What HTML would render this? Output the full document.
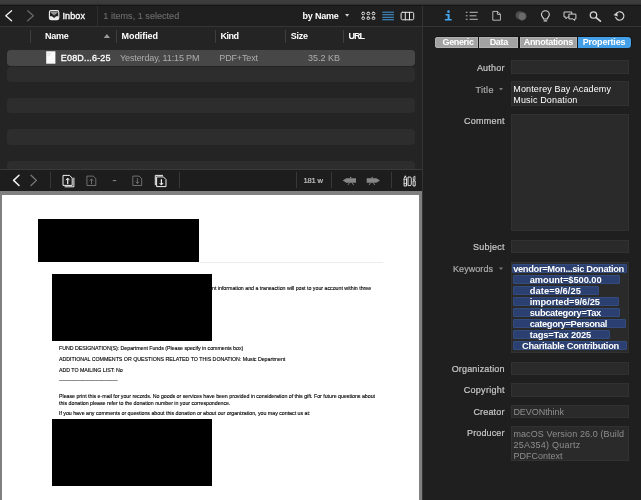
<!DOCTYPE html>
<html><head><meta charset="utf-8"><title>DEVONthink</title>
<style>
html,body{margin:0;padding:0;width:641px;height:500px;overflow:hidden;background:#1f1f1f;}
body{position:relative;font-family:"Liberation Sans",sans-serif;}
.a{position:absolute;}
.t{position:absolute;white-space:pre;line-height:1;font-family:"Liberation Sans",sans-serif;}
.d{transform:scale(0.5);transform-origin:0 0;color:#000;font-weight:normal;}
.stripe{position:absolute;left:7px;width:407.5px;height:15.2px;border-radius:4px;background:#2d2d2d;}
.hsep{position:absolute;top:30px;width:1px;height:12.5px;background:#3e3e3e;}
.vsep{position:absolute;top:172px;width:1px;height:16px;background:#383838;}
.fld{position:absolute;left:510.8px;width:118px;background:#2a2a2a;border:1px solid #313131;box-sizing:border-box;}
.tok{position:absolute;height:9.2px;background:#2b4070;border:0.5px solid #344b7e;box-sizing:border-box;border-radius:1px;}
.seg{position:absolute;top:36.7px;height:11px;background:#a2a2a2;box-shadow:inset 0 0 0 0.6px #bdbdbd;}
svg{position:absolute;overflow:visible;}
</style></head><body>
<!-- window top strip -->
<div class="a" style="left:0;top:0;width:641px;height:5px;background:linear-gradient(#3e3e3e 0%,#3b3b3b 65%,#2b2b2b 100%)"></div>
<div class="a" style="left:0;top:5px;width:641px;height:1px;background:#151515"></div>
<!-- left list pane -->
<div class="a" style="left:0;top:6px;width:422px;height:20.3px;background:#1f1f1f"></div>
<div class="a" style="left:0;top:26.7px;width:422px;height:142.5px;background:#242424"></div>
<div class="a" style="left:0;top:26px;width:641px;height:1px;background:#353535"></div>
<div class="a" style="left:97px;top:6px;width:1px;height:20px;background:#2e2e2e"></div>
<!-- header seps -->
<div class="hsep" style="left:30.2px"></div><div class="hsep" style="left:116.3px"></div><div class="hsep" style="left:215.3px"></div><div class="hsep" style="left:284.7px"></div><div class="hsep" style="left:343.1px"></div>
<!-- rows -->
<div class="stripe" style="top:50px;height:15.8px;background:#474747"></div>
<div class="stripe" style="top:66.8px"></div>
<div class="stripe" style="top:97.7px;height:15.7px"></div>
<div class="stripe" style="top:129.1px;height:15.9px"></div>
<div class="stripe" style="top:160.9px;height:8.3px;border-radius:4px 4px 0 0"></div>
<!-- viewer toolbar -->
<div class="a" style="left:0;top:169.2px;width:422px;height:1px;background:#3a3a3a"></div>
<div class="a" style="left:0;top:170.2px;width:422px;height:20.8px;background:#1d1d1d"></div>
<div class="vsep" style="left:50px"></div><div class="vsep" style="left:179px"></div><div class="vsep" style="left:296.3px"></div><div class="vsep" style="left:331.3px"></div><div class="vsep" style="left:391.3px"></div>
<!-- viewer -->
<div class="a" style="left:0;top:191px;width:421.6px;height:309px;background:#808080"></div>
<div class="a" style="left:1.7px;top:195.2px;width:417.5px;height:305px;background:#fff"></div>
<div class="a" style="left:38.4px;top:219.4px;width:160.7px;height:42.7px;background:#000"></div>
<div class="a" style="left:199px;top:262.1px;width:184px;height:0.8px;background:#ececec"></div>
<div class="a" style="left:51.8px;top:274px;width:160.2px;height:67.3px;background:#000"></div>
<div class="a" style="left:51.8px;top:418.5px;width:160.2px;height:67.2px;background:#000"></div>
<!-- divider -->
<div class="a" style="left:421.6px;top:6px;width:1.4px;height:494px;background:#343434"></div>
<!-- right pane -->
<div class="a" style="left:423px;top:6px;width:218px;height:494px;background:#1f1f1f"></div>
<div class="a" style="left:423px;top:26px;width:218px;height:1px;background:#353535"></div>
<!-- segmented -->
<div class="a" style="left:434.8px;top:36.2px;width:197px;height:12px;background:#151515;border-radius:4px"></div>
<div class="seg" style="left:435.2px;width:42.6px;border-radius:3px 0 0 3px"></div>
<div class="seg" style="left:479.4px;width:39px"></div>
<div class="seg" style="left:520px;width:56.7px"></div>
<div class="seg" style="left:578.2px;width:53.2px;border-radius:0 3px 3px 0;background:#429fe8;box-shadow:none"></div>
<!-- fields -->
<div class="fld" style="top:60px;height:13.5px"></div>
<div class="fld" style="top:81.2px;height:25px"></div>
<div class="fld" style="top:113.8px;height:117.7px"></div>
<div class="fld" style="top:240.1px;height:13px"></div>
<div class="fld" style="top:262px;height:90.8px"></div>
<div class="fld" style="top:362px;height:13.2px"></div>
<div class="fld" style="top:383.4px;height:13.2px"></div>
<div class="fld" style="top:404.6px;height:13.4px"></div>
<div class="fld" style="top:426.2px;height:35.3px"></div>
<div class="tok" style="left:512.4px;top:263.9px;width:114.7px"></div>
<div class="tok" style="left:513.2px;top:274.9px;width:107.3px"></div>
<div class="tok" style="left:513.2px;top:286.0px;width:86.2px"></div>
<div class="tok" style="left:513.2px;top:297.0px;width:105.6px"></div>
<div class="tok" style="left:513.2px;top:308.1px;width:106.7px"></div>
<div class="tok" style="left:513.2px;top:319.2px;width:112.6px"></div>
<div class="tok" style="left:513.2px;top:330.2px;width:96.8px"></div>
<div class="tok" style="left:513.2px;top:341.3px;width:113.8px"></div>

<svg class="a" style="left:0;top:0" width="641" height="500" viewBox="0 0 641 500" fill="none" stroke-linecap="round" stroke-linejoin="round">
<!-- top-left nav arrows -->
<path d="M11.6 10.8 L5.8 15.8 L11.6 20.8" stroke="#f2f2f2" stroke-width="1.3"/>
<path d="M27.6 10.8 L33.4 15.8 L27.6 20.8" stroke="#6c6c6c" stroke-width="1.2"/>
<!-- inbox icon -->
<rect x="49.4" y="10.6" width="9.4" height="9" rx="1.6" stroke="#f0f0f0" stroke-width="1.1"/>
<path d="M49.4 16.2 L52 16.2 L54.1 17.9 L56.2 16.2 L58.8 16.2 L58.8 18.4 Q58.8 19.6 57.6 19.6 L50.6 19.6 Q49.4 19.6 49.4 18.4 Z" fill="#ececec" stroke="none"/>
<path d="M50.6 12.3 H57.6" stroke="#b8b8b8" stroke-width="1" stroke-linecap="butt"/><path d="M51.7 13.5 H56.5 M52.7 14.7 H55.5" stroke="#a0a0a0" stroke-width="0.9" stroke-linecap="butt"/>
<!-- sort triangle in header -->
<path d="M106.9 33.9 L110 38 L103.8 38 Z" fill="#9a9a9a" stroke="none"/>
<!-- by Name dropdown -->
<path d="M345.1 13.9 L349.2 13.9 L347.15 16.7 Z" fill="#d4d4d4" stroke="none"/>
<!-- grid icon -->
<g stroke="#e4e4e4" stroke-width="1">
<rect x="361.80" y="12.30" width="2.8" height="2.4" rx="1.1"/><rect x="366.95" y="12.30" width="2.8" height="2.4" rx="1.1"/><rect x="372.10" y="12.30" width="2.8" height="2.4" rx="1.1"/><rect x="361.80" y="17.00" width="2.8" height="2.4" rx="1.1"/><rect x="366.95" y="17.00" width="2.8" height="2.4" rx="1.1"/><rect x="372.10" y="17.00" width="2.8" height="2.4" rx="1.1"/>
</g>
<!-- list icon (active) -->
<path d="M382.3 12.2 H393.9 M382.3 14.75 H393.9 M382.3 17.3 H393.9 M382.3 19.75 H393.9" stroke="#4aaaf2" stroke-width="0.9" stroke-linecap="butt"/>
<!-- columns icon -->
<rect x="401.1" y="12.3" width="12.6" height="7.5" rx="1.4" stroke="#e6e6e6" stroke-width="1"/>
<path d="M405.3 12.3 V19.8 M409.5 12.3 V19.8" stroke="#e6e6e6" stroke-width="1"/>
<!-- info i -->
<g fill="#45a6ef" stroke="none">
<circle cx="448.5" cy="11.7" r="1.35"/>
<path d="M445.6 13.9 H449.6 V18.9 H451.6 V20.5 H444.9 V18.9 H447.6 V15.5 H445.6 Z"/>
</g>
<!-- list bullet icon -->
<g stroke="#c4c4c4" stroke-width="0.95" stroke-linecap="butt">
<path d="M469.6 12.3 H477.8 M469.6 15.8 H476.4 M469.6 19.3 H477.8"/>
<path d="M465.8 12.3 H467.5 M465.8 15.8 H467.5 M465.8 19.3 H467.5"/>
</g>
<!-- doc icon -->
<path d="M493.2 11.4 H497.6 L500.4 14.2 V20.2 H493.2 Z" stroke="#bebebe" stroke-width="0.95"/>
<path d="M497.4 11.6 V14.4 H500.2" stroke="#c6c6c6" stroke-width="0.9"/>
<!-- dim circles -->
<circle cx="519.7" cy="15.2" r="4" fill="#505050" stroke="none"/>
<circle cx="522.2" cy="16.3" r="4.1" fill="#6a6a6a" stroke="#3c3c3c" stroke-width="0.6"/>
<!-- bulb -->
<path d="M543.6 19 C543.6 17.6 541.5 16.9 541.5 14.6 A3.9 3.9 0 0 1 549.3 14.6 C549.3 16.9 547.2 17.6 547.2 19 Z" stroke="#d6d6d6" stroke-width="1.15"/>
<path d="M544.1 20.9 H546.7" stroke="#d6d6d6" stroke-width="1.1"/>
<!-- chat -->
<path d="M564.4 12 H571.8 V17 H567.6 L566 18.8 V17 H564.4 Z" stroke="#cfcfcf" stroke-width="1"/>
<path d="M569.3 14.1 H575.9 V18.9 H574.6 V20.6 L573 18.9 H569.3 Z" stroke="#cfcfcf" stroke-width="1" fill="#1f1f1f"/>
<!-- magnifier -->
<circle cx="593.5" cy="15" r="3.2" stroke="#d4d4d4" stroke-width="1.3"/>
<path d="M596.1 17.6 L600.4 21.1" stroke="#d4d4d4" stroke-width="1.7"/>
<!-- refresh -->
<path d="M617.2 12.6 A4.2 4.2 0 1 1 615.7 17.4" stroke="#d4d4d4" stroke-width="1.15"/>
<path d="M613.5 15 L617.3 12 L617.7 16.4 Z" fill="#d4d4d4" stroke="none"/>
<!-- title / keywords popup arrows -->
<path d="M498.9 88 L503.1 88 L501 90.6 Z" fill="#787878" stroke="none"/>
<path d="M498.9 267.4 L503.1 267.4 L501 270 Z" fill="#787878" stroke="none"/>
<!-- row doc icon -->
<rect x="46.2" y="51.3" width="9.2" height="12.4" fill="#fafafa" stroke="none"/>
<path d="M47.4 53.6 H50.6 M47.4 55.2 H49.8" stroke="#d8d8d8" stroke-width="0.7"/>
<!-- viewer toolbar nav -->
<path d="M19 175.3 L13.6 180.4 L19 185.5" stroke="#f4f4f4" stroke-width="1.5"/>
<path d="M31 175.3 L36.4 180.4 L31 185.5" stroke="#7a7a7a" stroke-width="1.3"/>
<!-- icon1: first page (stack) -->
<g stroke="#f0f0f0" stroke-width="1">
<path d="M65 186.8 H73.9 V178"/>
<path d="M63.4 175.4 H69.6 L72.2 178 V185.4 H63.4 Z" fill="#1d1d1d"/>
<path d="M67.7 183.6 V178.6" stroke-width="1.2"/><path d="M66.2 179.9 L67.7 178.2 L69.2 179.9" stroke-width="1"/>
</g>
<!-- icon2: prev page dim -->
<g stroke="#787878" stroke-width="0.9">
<path d="M87.3 176.1 H93.2 L95.8 178.7 V185.5 H87.3 Z"/>
<path d="M91.5 183.8 V179.2"/><path d="M90.2 180.4 L91.5 179 L92.8 180.4"/>
</g>
<path d="M113.2 180.6 H115.8" stroke="#8a8a8a" stroke-width="1"/>
<!-- icon4: next page dim -->
<g stroke="#787878" stroke-width="0.9">
<path d="M133.2 176.1 H139.1 L141.7 178.7 V185.5 H133.2 Z"/>
<path d="M137.4 178.6 V183.2"/><path d="M136.1 182 L137.4 183.4 L138.7 182"/>
</g>
<!-- icon5: last page (stack) -->
<g stroke="#f0f0f0" stroke-width="1">
<path d="M155.3 184.8 V175.4 H162.6"/>
<path d="M157 176.9 H163.4 L166 179.5 V186.6 H157 Z" fill="#1d1d1d"/>
<path d="M161.4 179.6 V184.6" stroke-width="1.2"/><path d="M159.9 183.3 L161.4 185 L162.9 183.3" stroke-width="1"/>
</g>
<!-- sign arrows -->
<g fill="#868686" stroke="none">
<path d="M342.7 180.5 L346.3 178.3 H356 V182.7 H346.3 Z"/>
<rect x="350" y="176.9" width="1.2" height="1.6"/>
<path d="M380 180.5 L376.4 178.3 H366.7 V182.7 H376.4 Z"/>
<rect x="371.5" y="176.9" width="1.2" height="1.6"/>
</g>
<path d="M349.6 182.6 L347.9 185 M352 182.6 L353.7 185 M370.7 182.6 L369 185 M373.1 182.6 L374.8 185" stroke="#868686" stroke-width="0.9" stroke-linecap="butt"/>
<!-- tools icon -->
<g stroke="#f0f0f0" stroke-width="0.9">
<path d="M404.1 185.6 V178.6 L405.3 175.8 L406.5 178.6 V185.6 Z"/>
<path d="M404.1 179.3 H406.5 M404.1 183.6 H406.5" stroke-width="0.7"/>
<path d="M408.4 177 H410 Q411.3 177 411.3 178.3 V184.3 Q411.3 185.6 410 185.6 H408.4 Z"/>
<path d="M413.1 185.6 V181 H415.2 V185.6 Z"/>
<path d="M413.3 179.8 V177.6 Q413.6 176.2 414.9 176.2 V179.8 Z" stroke-width="0.8"/>
</g>
</svg>

<div id="txt" style="position:absolute;left:0;top:0;width:641px;height:500px;will-change:transform">
<span class="t" style="left:62.5px;top:12.2px;font-size:9px;font-weight:normal;color:#ffffff;letter-spacing:0.117px;-webkit-text-stroke:0.3px #fff;">Inbox</span>
<span class="t" style="left:103.3px;top:12.2px;font-size:9px;font-weight:normal;color:#6a6a6a;letter-spacing:0.047px;-webkit-text-stroke:0.15px #6a6a6a;">1 items, 1 selected</span>
<span class="t" style="left:302.5px;top:12.2px;font-size:9px;font-weight:bold;color:#ffffff;letter-spacing:-0.205px;">by Name</span>
<span class="t" style="left:45.0px;top:31.5px;font-size:9px;font-weight:bold;color:#ffffff;letter-spacing:-0.239px;">Name</span>
<span class="t" style="left:121.6px;top:31.5px;font-size:9px;font-weight:bold;color:#ffffff;letter-spacing:-0.086px;">Modified</span>
<span class="t" style="left:220.6px;top:31.5px;font-size:9px;font-weight:bold;color:#ffffff;letter-spacing:-0.533px;">Kind</span>
<span class="t" style="left:290.8px;top:31.5px;font-size:9px;font-weight:bold;color:#ffffff;letter-spacing:-0.272px;">Size</span>
<span class="t" style="left:348.6px;top:31.5px;font-size:9px;font-weight:bold;color:#ffffff;letter-spacing:-1.050px;">URL</span>
<span class="t" style="left:60.8px;top:54.2px;font-size:9px;font-weight:normal;color:#ffffff;letter-spacing:0.167px;-webkit-text-stroke:0.3px #fff;">E08D...6-25</span>
<span class="t" style="left:120.0px;top:54.2px;font-size:9px;font-weight:normal;color:#adadad;letter-spacing:-0.133px;">Yesterday, 11:15 PM</span>
<span class="t" style="left:219.3px;top:54.2px;font-size:9px;font-weight:normal;color:#adadad;letter-spacing:-0.152px;">PDF+Text</span>
<span class="t" style="left:308.0px;top:54.2px;font-size:9px;font-weight:normal;color:#adadad;letter-spacing:-0.005px;">35.2 KB</span>
<span class="t" style="left:303.5px;top:176.7px;font-size:7.6px;font-weight:normal;color:#c4c4c4;letter-spacing:-0.191px;-webkit-text-stroke:0.2px #c4c4c4;">181 w</span>
<span class="t" style="left:442.5px;top:37.5px;font-size:9px;font-weight:bold;color:#ffffff;letter-spacing:-0.355px;">Generic</span>
<span class="t" style="left:489.7px;top:37.5px;font-size:9px;font-weight:bold;color:#ffffff;letter-spacing:-0.339px;">Data</span>
<span class="t" style="left:523.7px;top:37.5px;font-size:9px;font-weight:bold;color:#ffffff;letter-spacing:-0.300px;">Annotations</span>
<span class="t" style="left:582.7px;top:37.5px;font-size:9px;font-weight:bold;color:#ffffff;letter-spacing:-0.192px;">Properties</span>
<span class="t" style="left:476.9px;top:63.8px;font-size:9px;font-weight:normal;color:#c8c8c8;letter-spacing:0.214px;-webkit-text-stroke:0.2px #c8c8c8;">Author</span>
<span class="t" style="left:475.5px;top:85.5px;font-size:9px;font-weight:normal;color:#ababab;letter-spacing:0.307px;-webkit-text-stroke:0.2px #ababab;">Title</span>
<span class="t" style="left:464.1px;top:117.4px;font-size:9px;font-weight:normal;color:#c8c8c8;letter-spacing:0.231px;-webkit-text-stroke:0.2px #c8c8c8;">Comment</span>
<span class="t" style="left:472.9px;top:243.0px;font-size:9px;font-weight:normal;color:#c8c8c8;letter-spacing:0.261px;-webkit-text-stroke:0.2px #c8c8c8;">Subject</span>
<span class="t" style="left:453.0px;top:265.0px;font-size:9px;font-weight:normal;color:#ababab;letter-spacing:0.069px;-webkit-text-stroke:0.2px #ababab;">Keywords</span>
<span class="t" style="left:451.7px;top:365.0px;font-size:9px;font-weight:normal;color:#c8c8c8;letter-spacing:0.161px;-webkit-text-stroke:0.2px #c8c8c8;">Organization</span>
<span class="t" style="left:463.8px;top:386.3px;font-size:9px;font-weight:normal;color:#c8c8c8;letter-spacing:0.271px;-webkit-text-stroke:0.2px #c8c8c8;">Copyright</span>
<span class="t" style="left:473.4px;top:407.5px;font-size:9px;font-weight:normal;color:#c8c8c8;letter-spacing:0.181px;-webkit-text-stroke:0.2px #c8c8c8;">Creator</span>
<span class="t" style="left:467.0px;top:429.4px;font-size:9px;font-weight:normal;color:#c8c8c8;letter-spacing:0.138px;-webkit-text-stroke:0.2px #c8c8c8;">Producer</span>
<span class="t" style="left:513.3px;top:84.5px;font-size:9px;font-weight:normal;color:#ffffff;letter-spacing:0.140px;">Monterey Bay Academy</span>
<span class="t" style="left:513.3px;top:96.1px;font-size:9px;font-weight:normal;color:#ffffff;letter-spacing:0.151px;">Music Donation</span>
<span class="t" style="left:513.4px;top:407.6px;font-size:9px;font-weight:normal;color:#8e8e8e;letter-spacing:-0.048px;">DEVONthink</span>
<span class="t" style="left:513.4px;top:429.8px;font-size:9px;font-weight:normal;color:#8e8e8e;letter-spacing:0.106px;">macOS Version 26.0 (Build</span>
<span class="t" style="left:513.4px;top:440.9px;font-size:9px;font-weight:normal;color:#8e8e8e;letter-spacing:0.258px;">25A354) Quartz</span>
<span class="t" style="left:513.4px;top:451.9px;font-size:9px;font-weight:normal;color:#8e8e8e;letter-spacing:-0.003px;">PDFContext</span>
<span class="t" style="left:513.2px;top:264.6px;font-size:9.3px;font-weight:bold;color:#ffffff;letter-spacing:-0.332px;">vendor=Mon...sic Donation</span>
<span class="t" style="left:529.7px;top:275.6px;font-size:9.3px;font-weight:bold;color:#ffffff;letter-spacing:-0.055px;">amount=$500.00</span>
<span class="t" style="left:529.7px;top:286.7px;font-size:9.3px;font-weight:bold;color:#ffffff;letter-spacing:0.089px;">date=9/6/25</span>
<span class="t" style="left:529.7px;top:297.7px;font-size:9.3px;font-weight:bold;color:#ffffff;letter-spacing:-0.054px;">imported=9/6/25</span>
<span class="t" style="left:529.7px;top:308.8px;font-size:9.3px;font-weight:bold;color:#ffffff;letter-spacing:-0.325px;">subcategory=Tax</span>
<span class="t" style="left:529.7px;top:319.9px;font-size:9.3px;font-weight:bold;color:#ffffff;letter-spacing:-0.367px;">category=Personal</span>
<span class="t" style="left:529.7px;top:330.9px;font-size:9.3px;font-weight:bold;color:#ffffff;letter-spacing:-0.128px;">tags=Tax 2025</span>
<span class="t" style="left:522.0px;top:342.0px;font-size:9.3px;font-weight:bold;color:#ffffff;letter-spacing:-0.301px;">Charitable Contribution</span>
<span class="t d" style="left:212.3px;top:284.5px;font-size:10.6px;letter-spacing:-0.045px;-webkit-text-stroke:0.24px #000;">nt information and a transaction will post to your account within three</span>
<span class="t d" style="left:58.7px;top:345.1px;font-size:10.6px;letter-spacing:-0.073px;-webkit-text-stroke:0.24px #000;">FUND DESIGNATION(S): Department Funds (Please specify in comments box)</span>
<span class="t d" style="left:58.7px;top:355.9px;font-size:10.6px;letter-spacing:-0.062px;-webkit-text-stroke:0.24px #000;">ADDITIONAL COMMENTS OR QUESTIONS RELATED TO THIS DONATION: Music Department</span>
<span class="t d" style="left:58.7px;top:366.6px;font-size:10.6px;letter-spacing:-0.096px;-webkit-text-stroke:0.24px #000;">ADD TO MAILING LIST: No</span>
<span class="t d" style="left:58.7px;top:377.0px;font-size:10.6px;letter-spacing:-0.608px;-webkit-text-stroke:0.24px #000;">----------------------------------------</span>
<span class="t d" style="left:58.7px;top:393.3px;font-size:10.6px;letter-spacing:-0.062px;-webkit-text-stroke:0.24px #000;">Please print this e-mail for your records. No goods or services have been provided in consideration of this gift. For future questions about</span>
<span class="t d" style="left:58.7px;top:399.6px;font-size:10.6px;letter-spacing:-0.062px;-webkit-text-stroke:0.24px #000;">this donation please refer to the donation number in your correspondence.</span>
<span class="t d" style="left:58.7px;top:410.3px;font-size:10.6px;letter-spacing:-0.064px;-webkit-text-stroke:0.24px #000;">If you have any comments or questions about this donation or about our organization, you may contact us at:</span>

</div>
</body></html>
